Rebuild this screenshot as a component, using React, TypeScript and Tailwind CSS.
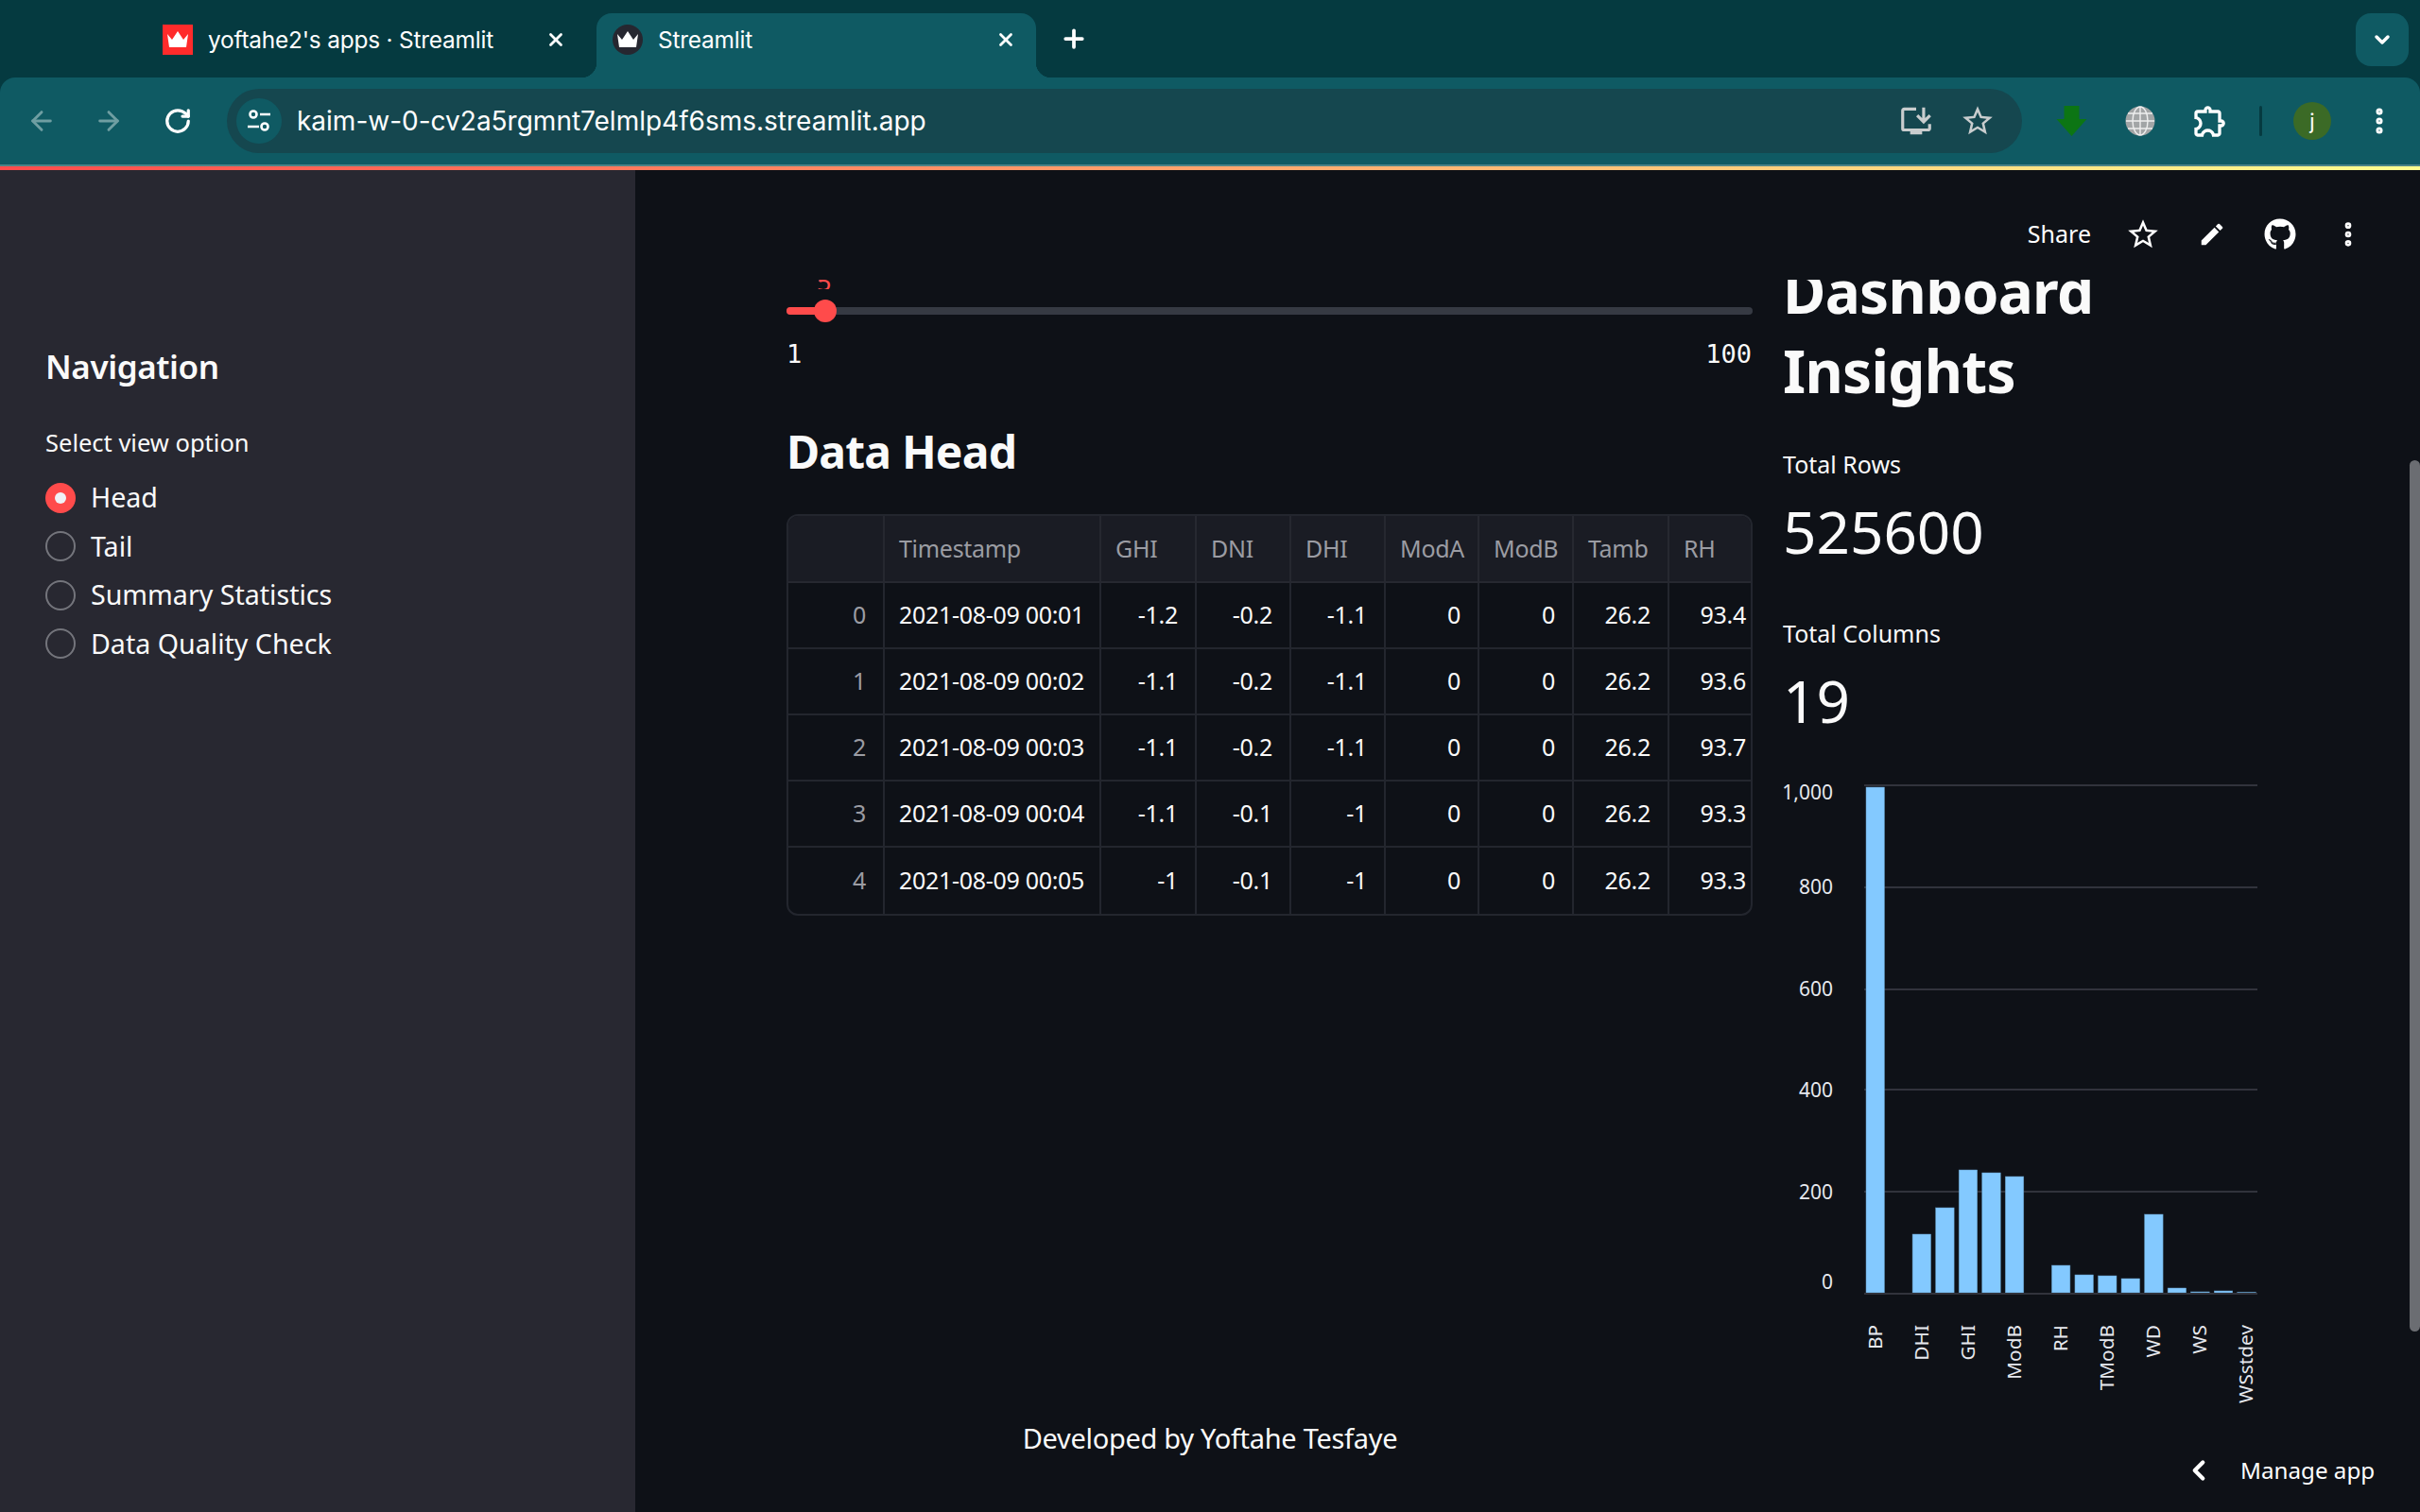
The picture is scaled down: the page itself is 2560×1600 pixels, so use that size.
import React from "react";
import { ArrowLeft, ArrowRight, RotateCw, Plus, X, ChevronDown, ChevronLeft, EllipsisVertical } from "lucide-react";
import { MdEdit, MdOutlineExtension, MdOutlineInstallDesktop, MdStarBorder } from "react-icons/md";
import { FaGithub } from "react-icons/fa";

const columns = ["Timestamp", "GHI", "DNI", "DHI", "ModA", "ModB", "Tamb", "RH"];

const rows = [
  ["0", "2021-08-09 00:01", "-1.2", "-0.2", "-1.1", "0", "0", "26.2", "93.4"],
  ["1", "2021-08-09 00:02", "-1.1", "-0.2", "-1.1", "0", "0", "26.2", "93.6"],
  ["2", "2021-08-09 00:03", "-1.1", "-0.2", "-1.1", "0", "0", "26.2", "93.7"],
  ["3", "2021-08-09 00:04", "-1.1", "-0.1", "-1", "0", "0", "26.2", "93.3"],
  ["4", "2021-08-09 00:05", "-1", "-0.1", "-1", "0", "0", "26.2", "93.3"],
];

const options = ["Head", "Tail", "Summary Statistics", "Data Quality Check"];

// chart coordinates are local to the svg box
const barTops = [13, null, 486, 458, 418, 421, 425, null, 519, 529, 530, 533, 465, 543, 547, 546, 547.5];
const gridLines = [11, 119, 227, 333, 441];
const yLabels = [
  { text: "1,000", y: 19 },
  { text: "800", y: 119 },
  { text: "600", y: 227 },
  { text: "400", y: 334 },
  { text: "200", y: 442 },
  { text: "0", y: 537 },
];
const xLabels = [
  { text: "BP", i: 0 },
  { text: "DHI", i: 2 },
  { text: "GHI", i: 4 },
  { text: "ModB", i: 6 },
  { text: "RH", i: 8 },
  { text: "TModB", i: 10 },
  { text: "WD", i: 12 },
  { text: "WS", i: 14 },
  { text: "WSstdev", i: 16 },
];

const Crown = () => (
  <path d="M5 10 L10 16 L16 7 L22 16 L27 10 L25 24 L7 24 Z" fill="#fff" />
);

const BarChart = () => (
  <svg width="510" height="680" viewBox="0 0 510 680" className="block">
    {gridLines.map((y) => (
      <line key={y} x1="86" x2="502" y1={y} y2={y} stroke="#31333c" strokeWidth="2" />
    ))}
    {barTops.map((top, i) =>
      top === null ? null : (
        <rect key={i} x={88 + i * 24.55} y={top} width="19.5" height={548 - top} fill="#83c9ff" stroke="#5f95bd" strokeWidth="0.5" />
      )
    )}
    <line x1="86" x2="502" y1="549" y2="549" stroke="#31333c" strokeWidth="2" />
    {yLabels.map((l) => (
      <text key={l.text} x="53" y={l.y} dy="7" textAnchor="end" fontSize="21" fill="#e6e8ee" fontFamily="Noto Sans">
        {l.text}
      </text>
    ))}
    {xLabels.map((l) => {
      const cx = 97.5 + l.i * 24.55;
      return (
        <text
          key={l.text}
          transform={`translate(${cx + 7} 582) rotate(-90)`}
          textAnchor="end"
          fontSize="20.8"
          fill="#e6e8ee"
          fontFamily="Noto Sans"
        >
          {l.text}
        </text>
      );
    })}
  </svg>
);

const DataTable = () => (
  <div className="w-[1022px] rounded-xl border-2 border-[#23262e] overflow-hidden text-[25px] tracking-[-0.3px]">
    <div className="grid grid-cols-[102px_229px_101px_100px_100px_99px_100px_101px_86px] h-[71px] bg-[#1a1c24] text-[#9b9ca3]">
      <div className="border-r-2 border-b-2 border-[#262830]" />
      {columns.map((c) => (
        <div key={c} className="flex items-center pl-[15px] border-r-2 last:border-r-0 border-b-2 border-[#262830]">
          {c}
        </div>
      ))}
    </div>
    {rows.map((row, r) => (
      <div key={r} className="grid grid-cols-[102px_229px_101px_100px_100px_99px_100px_101px_86px] h-[70px] text-[#fafafa]">
        {row.map((cell, i) => (
          <div
            key={i}
            className={`flex items-center border-r-2 last:border-r-0 border-[#23262e] ${r < 4 ? "border-b-2" : ""} ${
              i === 0
                ? "justify-end pr-[18px] text-[#9b9ca3]"
                : i === 1
                ? "pl-[15px]"
                : i === 8
                ? "justify-end pr-[5px]"
                : "justify-end pr-[18px]"
            }`}
          >
            {cell}
          </div>
        ))}
      </div>
    ))}
  </div>
);

export default function App() {
  return (
    <div className="relative w-[2560px] h-[1600px] overflow-hidden flex flex-col bg-[#0e1117] text-[#fafafa] font-['Noto_Sans',sans-serif]">
      {/* tab strip */}
      <div className="h-[82px] shrink-0 bg-[#053a40] flex items-end pl-[172px] font-['Inter',sans-serif] text-[24.4px] text-white">
        <div className="w-[459px] h-[68px] flex items-center pb-[12px]">
          <svg width="32" height="32" viewBox="0 0 32 32" className="shrink-0">
            <rect width="32" height="32" fill="#ff2b2b" />
            <Crown />
          </svg>
          <span className="ml-[16px] tracking-[-0.2px]">yoftahe2's apps · Streamlit</span>
          <X size={22} strokeWidth={3} className="ml-auto mr-[32px]" />
        </div>
        <div className="relative w-[465px] h-[68px] bg-[#0f5a63] rounded-t-2xl flex items-center pl-[17px] pb-[12px]">
          <span className="absolute -left-4 bottom-0 size-4 bg-[radial-gradient(circle_at_0_0,#053a40_16px,#0f5a63_16.5px)]" />
          <span className="absolute -right-4 bottom-0 size-4 bg-[radial-gradient(circle_at_100%_0,#053a40_16px,#0f5a63_16.5px)]" />
          <svg width="32" height="32" viewBox="0 0 32 32" className="shrink-0">
            <circle cx="16" cy="16" r="16" fill="#262730" />
            <Crown />
          </svg>
          <span className="ml-[16px] tracking-[-0.2px]">Streamlit</span>
          <X size={22} strokeWidth={3} className="ml-auto mr-[21px]" />
        </div>
        <Plus size={30} strokeWidth={3} className="ml-[25px] mb-[26px]" />
        <div className="ml-auto mr-[12px] mb-[12px] size-[56px] rounded-2xl bg-[#0f5a63] flex items-center justify-center">
          <ChevronDown size={24} strokeWidth={3.5} />
        </div>
      </div>

      {/* toolbar */}
      <div className="h-[92px] shrink-0 bg-[#053a40]">
        <div className="h-full rounded-t-2xl bg-[#0f5a63] flex items-center text-white">
          <ArrowLeft size={32} strokeWidth={2.2} className="ml-[28px] text-[#6f9ea2]" />
          <ArrowRight size={32} strokeWidth={2.2} className="ml-[39px] text-[#6f9ea2]" />
          <RotateCw size={30} strokeWidth={2.6} className="ml-[42px]" />
          <div className="ml-[37px] w-[1899px] h-[68px] rounded-full bg-[#15474f] flex items-center pl-[10px]">
            <div className="size-[48px] rounded-full bg-[#0f5a63] flex items-center justify-center">
              <svg width="30" height="30" viewBox="0 0 30 30" fill="none" stroke="#fff" strokeWidth="2.6">
                <circle cx="9" cy="8" r="3.5" />
                <path d="M16 8h11M3 21h12" />
                <circle cx="21" cy="21" r="3.5" />
              </svg>
            </div>
            <span className="ml-[16px] font-['Inter',sans-serif] text-[28px]">kaim-w-0-cv2a5rgmnt7elmlp4f6sms.streamlit.app</span>
            <MdOutlineInstallDesktop size={38} className="ml-auto text-[#c9cdce]" />
            <MdStarBorder size={38} className="ml-[27px] mr-[28px] text-[#c9cdce]" />
          </div>
          <svg width="33" height="32" viewBox="0 0 32 32" className="ml-[36px]">
            <path d="M8 0h16v14h8L16 32 0 14h8z" fill="#0c7514" />
          </svg>
          <svg width="32" height="32" viewBox="0 0 32 32" className="ml-[40px]" fill="none" stroke="#eee" strokeWidth="1.4">
            <circle cx="16" cy="16" r="15.5" fill="#a2a5a6" stroke="none" />
            <path d="M1 16h30M3 8h26M3 24h26M16 1v30" />
            <ellipse cx="16" cy="16" rx="8" ry="15" />
          </svg>
          <MdOutlineExtension size={40} className="ml-[38px]" />
          <div className="ml-[32px] w-[3px] h-[32px] rounded bg-[#053a40]" />
          <div className="ml-[33px] size-[40px] rounded-full bg-[#3b6a26] flex items-center justify-center text-[22px] font-['Inter',sans-serif]">j</div>
          <EllipsisVertical size={34} strokeWidth={3} className="ml-[34px]" />
        </div>
      </div>

      <div className="h-[6px] shrink-0 border-t-2 border-[#4b8387] bg-[linear-gradient(90deg,#ff4b4b,#ffff8f)]" />

      <div className="flex-1 flex min-h-0">
        {/* sidebar */}
        <aside className="w-[672px] shrink-0 bg-[#282831] pt-[183px] pl-[48px]">
          <h2 className="h-[50px] flex items-center text-[35px] font-semibold tracking-[-0.4px]">Navigation</h2>
          <p className="mt-[37px] h-[36px] flex items-center text-[25.5px]">Select view option</p>
          <div className="mt-[15px]">
            {options.map((o) => (
              <div key={o} className="h-[51.5px] flex items-center text-[28.6px]">
                {o === "Head" ? (
                  <span className="size-[32px] rounded-full bg-[#ff4b4b] flex items-center justify-center">
                    <span className="size-[12px] rounded-full bg-[#f0f2f6]" />
                  </span>
                ) : (
                  <span className="size-[32px] rounded-full border-2 border-[#74757c]" />
                )}
                <span className="ml-[16px]">{o}</span>
              </div>
            ))}
          </div>
        </aside>

        {/* main */}
        <main className="flex-1 min-w-0 flex flex-col">
          <header className="h-[116px] shrink-0 flex items-center justify-end pr-[60px] pt-[20px] text-white">
            <span className="text-[25px] mr-[36px]">Share</span>
            <MdStarBorder size={38} className="mr-[39px]" />
            <MdEdit size={30} className="mr-[40px]" />
            <FaGithub size={34} className="mr-[39px]" />
            <EllipsisVertical size={32} strokeWidth={3} />
          </header>

          <div className="flex-1 min-h-0 overflow-hidden flex pl-[160px] gap-[32px]">
            {/* left column */}
            <div className="w-[1022px] shrink-0">
              <div className="h-[10px] overflow-hidden flex items-end pl-[32px]">
                <span className="text-[#ff4b4b] text-[27px] leading-[27px] -mb-[5px]">5</span>
              </div>
              <div className="relative mt-[19px] h-[8px] rounded-full bg-[#363a43]">
                <div className="h-full w-[40px] rounded-l-full bg-[#ff4b4b]" />
                <div className="absolute left-[29px] -top-[8px] size-[24px] rounded-full bg-[#ff4b4b]" />
              </div>
              <div className="mt-[26px] flex justify-between font-['DejaVu_Sans_Mono',monospace] text-[27px] leading-[32px]">
                <span>1</span>
                <span className="mr-[1px]">100</span>
              </div>
              <h2 className="mt-[52px] h-[70px] flex items-center text-[48px] font-bold tracking-[-0.8px]">Data Head</h2>
              <div className="mt-[31px]">
                <DataTable />
              </div>
            </div>

            {/* right column */}
            <div className="w-[502px] shrink-0">
              <h2 className="-mt-[30px] text-[62px] leading-[84px] font-bold tracking-[-0.7px]">
                Dashboard
                <br />
                Insights
              </h2>
              <p className="mt-[39px] text-[25px] leading-[36px]">Total Rows</p>
              <p className="mt-[8px] text-[62px] leading-[90px]">525600</p>
              <p className="mt-[45px] text-[25px] leading-[36px]">Total Columns</p>
              <p className="mt-[8px] text-[62px] leading-[90px]">19</p>
              <div className="mt-[34px]">
                <BarChart />
              </div>
            </div>
          </div>
        </main>
      </div>

      {/* fixed overlays */}
      <p className="absolute left-0 right-0 top-[1502px] text-center text-[29px] leading-[40px] tracking-[-0.3px]">Developed by Yoftahe Tesfaye</p>
      <div className="absolute left-[2309px] top-[1538px] h-[36px] flex items-center text-[24.2px] text-white">
        <ChevronLeft size={34} strokeWidth={3} />
        <span className="ml-[27px]">Manage app</span>
      </div>
      <div className="absolute right-0 top-[487px] w-[11px] h-[922px] rounded-full bg-[#6b6d72]" />
    </div>
  );
}
